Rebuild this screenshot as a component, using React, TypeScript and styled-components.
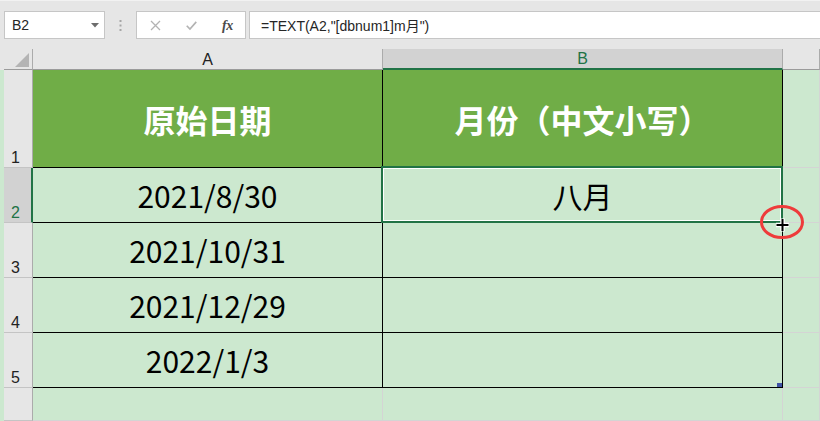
import React from 'react';
import styled, { createGlobalStyle, css } from 'styled-components';

const GlobalStyle = createGlobalStyle`
  html, body { margin: 0; padding: 0; background: #e6e6e6; }
  #root { width: 820px; height: 421px; }
`;

const GREEN_TITLE = '#70ad47';
const GREEN_FILL = '#cce8cf';
const SEL_GREEN = '#217346';
const HEAD_BG = '#e6e6e6';
const HEAD_SEL = '#d2d2d2';
const HEAD_LINE = '#ababab';
const GRID = '#d4d4d4';

const Page = styled.div`
  position: relative;
  width: 820px;
  height: 421px;
  overflow: hidden;
  background: ${HEAD_BG};
  display: flex;
  flex-direction: column;
  font-family: "Liberation Sans", "Noto Sans CJK SC", sans-serif;
`;

const Toolbar = styled.div`
  height: 49px;
  flex: none;
  box-sizing: border-box;
  border-top: 1px solid #f2f2f2;
  padding: 10px 0 0 4px;
  display: flex;
  align-items: flex-start;
`;

const NameBox = styled.div`
  width: 101px;
  height: 28px;
  box-sizing: border-box;
  background: #fff;
  border: 1px solid #c6c6c6;
  display: flex;
  align-items: center;
  justify-content: space-between;
  padding: 0 5px 0 7px;
  font-size: 14px;
  color: #262626;
`;

const Grip = styled.div`
  width: 31px;
  height: 28px;
  display: flex;
  align-items: center;
  justify-content: center;
`;

const FuncBox = styled.div`
  width: 110px;
  height: 28px;
  margin-right: 3px;
  box-sizing: border-box;
  background: #fff;
  border: 1px solid #c6c6c6;
  display: flex;
  align-items: center;
  gap: 25px;
  padding-left: 13px;
`;

const FuncIcon = styled.span`
  width: 11px;
  height: 11px;
  display: flex;
  align-items: center;
  justify-content: center;
`;

const FxLabel = styled.span`
  width: 11px;
  font-family: "Liberation Serif", "DejaVu Serif", serif;
  font-style: italic;
  font-weight: bold;
  font-size: 14px;
  color: #4a4a4a;
  letter-spacing: -0.5px;
  line-height: 11px;
`;

const FormulaBar = styled.div`
  flex: 1;
  height: 28px;
  box-sizing: border-box;
  background: #fff;
  border: 1px solid #c6c6c6;
  border-right: none;
  display: flex;
  align-items: center;
  padding-left: 11px;
  font-size: 14px;
  color: #262626;
  white-space: nowrap;
`;

const Sheet = styled.div`
  flex: 1;
  display: grid;
  grid-template-columns: 4px 29px 350px 400px 1fr;
  grid-template-rows: 21px 98px repeat(4, 55px) 1fr;
`;

const Strip = styled.div<{ $head?: boolean }>`
  background: ${(p) => (p.$head ? HEAD_BG : GREEN_FILL)};
`;

const Corner = styled.div`
  box-sizing: border-box;
  background: ${HEAD_BG};
  border-right: 1px solid ${HEAD_LINE};
  border-bottom: 1px solid #9b9b9b;
  display: flex;
  align-items: flex-end;
  justify-content: flex-end;
  padding: 0 3px 2px 0;
`;

const ColHead = styled.div<{ $selected?: boolean }>`
  box-sizing: border-box;
  background: ${(p) => (p.$selected ? HEAD_SEL : HEAD_BG)};
  border-right: 1px solid ${HEAD_LINE};
  border-bottom: ${(p) => (p.$selected ? `2px solid ${SEL_GREEN}` : '1px solid #9b9b9b')};
  color: ${(p) => (p.$selected ? SEL_GREEN : '#222')};
  font-size: 16px;
  display: flex;
  align-items: center;
  justify-content: center;
  padding-top: 1px;
`;

const RowHead = styled.div<{ $selected?: boolean }>`
  box-sizing: border-box;
  background: ${(p) => (p.$selected ? HEAD_SEL : HEAD_BG)};
  border-right: ${(p) => (p.$selected ? `2px solid ${SEL_GREEN}` : `1px solid ${HEAD_LINE}`)};
  border-bottom: 1px solid #c4c4c4;
  color: ${(p) => (p.$selected ? SEL_GREEN : '#222')};
  font-size: 16px;
  line-height: 16px;
  display: flex;
  align-items: flex-end;
  justify-content: center;
  padding: 0 ${(p) => (p.$selected ? 4 : 5)}px 1px 0;
`;

type Variant = 'title' | 'data' | 'outside';

const Cell = styled.div<{ $variant: Variant }>`
  position: relative;
  box-sizing: border-box;
  background: ${(p) => (p.$variant === 'title' ? GREEN_TITLE : GREEN_FILL)};
  border-right: 1px solid ${(p) => (p.$variant === 'outside' ? GRID : '#000')};
  border-bottom: 1px solid ${(p) => (p.$variant === 'outside' ? GRID : '#000')};
  display: flex;
  align-items: center;
  justify-content: center;
  font-family: "Noto Sans CJK SC", "Noto Sans", sans-serif;
  white-space: nowrap;
  ${(p) =>
    p.$variant === 'title'
      ? css`
          color: #fff;
          font-size: 32px;
          font-weight: bold;
        `
      : css`
          color: #000;
          font-size: 30px;
        `}
`;

const Selection = styled.div`
  position: absolute;
  top: -2px;
  left: -2px;
  right: -1px;
  bottom: -1px;
  border: 2px solid ${SEL_GREEN};
  box-shadow: inset 0 0 0 1px #fff;
  pointer-events: none;
`;

const FillMark = styled.div`
  position: absolute;
  right: 0;
  bottom: 0;
  width: 5px;
  height: 4px;
  background: #3f51a5;
`;

const CursorMark = styled.svg`
  position: absolute;
  left: 756px;
  top: 202px;
`;

const rows = [
  { n: 1, a: '原始日期', b: '月份（中文小写）', title: true, selected: false },
  { n: 2, a: '2021/8/30', b: '八月', title: false, selected: true },
  { n: 3, a: '2021/10/31', b: '', title: false, selected: false },
  { n: 4, a: '2021/12/29', b: '', title: false, selected: false },
  { n: 5, a: '2022/1/3', b: '', title: false, selected: false },
];

export default function App() {
  return (
    <>
      <GlobalStyle />
      <Page>
        <Toolbar>
          <NameBox>
            <span>B2</span>
            <svg width="8" height="5" viewBox="0 0 8 5">
              <polygon points="0,0 8,0 4,4.5" fill="#6d6d6d" />
            </svg>
          </NameBox>
          <Grip>
            <svg width="3" height="11" viewBox="0 0 3 11">
              <rect x="0.5" y="0" width="2" height="2" fill="#a6a6a6" />
              <rect x="0.5" y="4.5" width="2" height="2" fill="#a6a6a6" />
              <rect x="0.5" y="9" width="2" height="2" fill="#a6a6a6" />
            </svg>
          </Grip>
          <FuncBox>
            <FuncIcon>
              <svg width="11" height="11" viewBox="0 0 11 11">
                <path d="M1 1 L10 10 M10 1 L1 10" stroke="#b3b3b3" strokeWidth="1.3" fill="none" />
              </svg>
            </FuncIcon>
            <FuncIcon>
              <svg width="12" height="11" viewBox="0 0 12 11">
                <path d="M0.8 5.8 L4.3 9.3 L11.2 1.5" stroke="#b3b3b3" strokeWidth="1.8" fill="none" />
              </svg>
            </FuncIcon>
            <FxLabel>fx</FxLabel>
          </FuncBox>
          <FormulaBar>=TEXT(A2,"[dbnum1]m月")</FormulaBar>
        </Toolbar>
        <Sheet>
          <Strip $head />
          <Corner>
            <svg width="14" height="14" viewBox="0 0 14 14">
              <polygon points="14,0 14,14 0,14" fill="#b4b4b4" />
            </svg>
          </Corner>
          <ColHead>A</ColHead>
          <ColHead $selected>B</ColHead>
          <ColHead />
          {rows.map((r) => (
            <React.Fragment key={r.n}>
              <Strip />
              <RowHead $selected={r.selected}>{r.n}</RowHead>
              <Cell $variant={r.title ? 'title' : 'data'}>{r.a}</Cell>
              <Cell $variant={r.title ? 'title' : 'data'}>
                {r.b}
                {r.selected && <Selection />}
                {r.n === 5 && <FillMark />}
              </Cell>
              <Cell $variant="outside" />
            </React.Fragment>
          ))}
          <Strip />
          <RowHead />
          <Cell $variant="outside" />
          <Cell $variant="outside" />
          <Cell $variant="outside" />
        </Sheet>
        <CursorMark width="52" height="42" viewBox="0 0 52 42">
          <ellipse cx="26" cy="20" rx="20.5" ry="15.5" fill="none" stroke="#ee3b3b" strokeWidth="3" />
          <path d="M26.5 16.5 V29.5 M20 23 H33" stroke="#fff" strokeWidth="4.5" fill="none" />
          <path d="M26.5 17 V29 M20.5 23 H32.5" stroke="#000" strokeWidth="2" fill="none" />
        </CursorMark>
      </Page>
    </>
  );
}
